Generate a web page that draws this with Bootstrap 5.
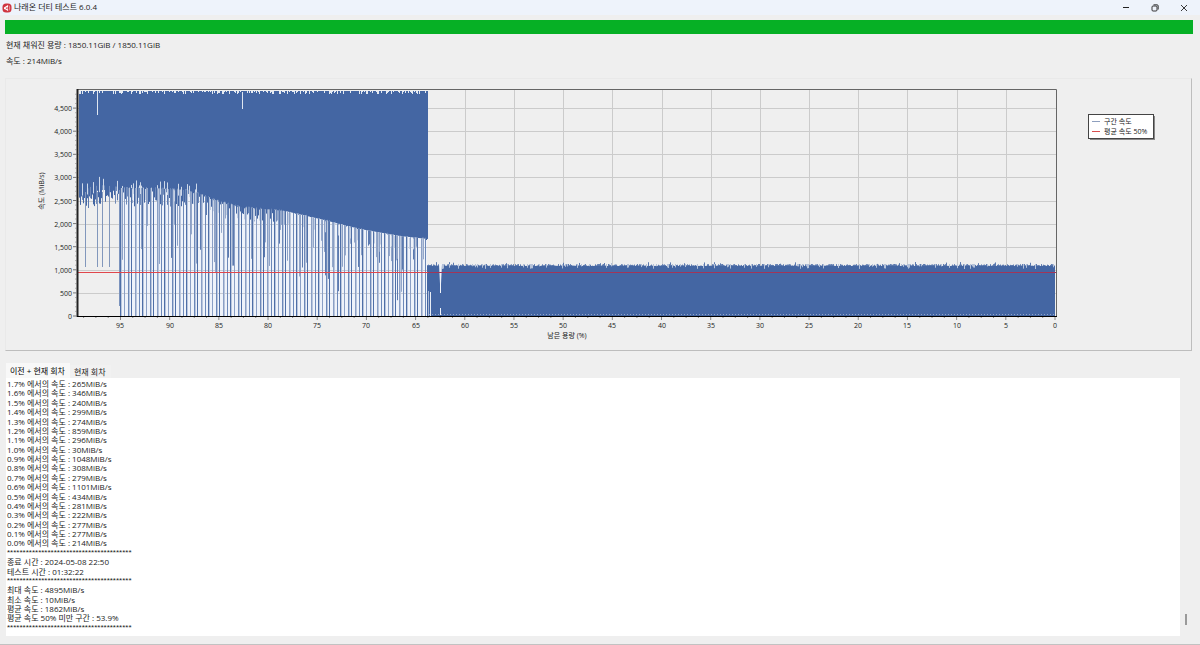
<!DOCTYPE html>
<html lang="ko">
<head>
<meta charset="utf-8">
<meta name="viewport" content="width=device-width, initial-scale=1">
<title>나래온 더티 테스트 6.0.4</title>
<link rel="stylesheet" href="https://cdn.jsdelivr.net/npm/bootstrap@5.3.0/dist/css/bootstrap.min.css">
<style>
  body { background: #efefef; color: #222; font: 8px/10px "Open Sans", "Noto Sans CJK KR", sans-serif; }
  .app-window { border-bottom: 1px solid #c2c2c2; }
  .title-bar { background: #eef3fb; height: 15px; padding: 0 2px; }
  .title-bar h1 { font-size: 8px; line-height: 10px; margin: 0 0 2px 2px; }
  .title-bar button { width: 29px; height: 14px; color: #222; }
  .fill-track { height: 14px; margin: 5px 7px 0 5px; background: #e6e6e6; }
  .fill-track .progress-bar { background: #06b025; }
  .stats { padding: 6px 6px 0; gap: 6px; }
  .chart-frame { margin: 12px 8px 0 5px; border: 1px solid #e9e9e9; border-right-color: #bdbdbd; border-bottom-color: #bdbdbd; }
  .chart-frame svg text { font-size: 7px; fill: #222; }
  .log-tabs { margin: 12px 0 0 6px; }
  .log-tabs .nav-link { padding: 2px 5px 1px 4px; height: 13px; line-height: 10px; border: 0; border-radius: 0; color: #222; background: #f1f1f1; }
  .log-tabs .nav-link.active { height: 15px; background: #f8f8f8; }
  .log-pane { background: #fff; margin: 0 20px 8px 6px; padding: 1px 1px 4px; min-height: 256px; }
  .log-pane .line { line-height: 9px; white-space: nowrap; }
  .log-pane .rule { font-family: "Liberation Sans", sans-serif; }
  .thumb { right: 13px; bottom: 19px; width: 2px; height: 11px; background: #9a9a9a; }
</style>
</head>
<body>
<div class="app-window d-flex flex-column min-vh-100 position-relative">
<header class="title-bar d-flex align-items-center">
  <svg width="10" height="10" viewBox="0 0 20 20" aria-hidden="true"><rect x="1" y="1" width="18" height="18" rx="7" fill="#cf3540"/><path d="M4 9l8-5v12l-5-3-3-1z" fill="#fff"/><path d="M7 10l4-2v5z" fill="#cf3540"/><path d="M14 5q3 5 0 10" fill="none" stroke="#f3b8bb" stroke-width="1.5"/></svg>
  <h1 class="fw-normal">나래온 더티 테스트 6.0.4</h1>
  <div class="ms-auto d-flex">
    <button class="btn p-0 border-0 d-flex align-items-center justify-content-center" aria-label="최소화"><svg width="8" height="8" viewBox="0 0 8 8"><path d="M1 3.500h6" stroke="currentColor"/></svg></button>
    <button class="btn p-0 border-0 d-flex align-items-center justify-content-center" aria-label="이전 크기로"><svg width="8" height="8" viewBox="0 0 8 8" fill="none" stroke="currentColor" stroke-width=".9"><rect x="1" y="2" width="5" height="5" rx="1"/><path d="M2.500 .8H6q1.200 0 1.200 1.200v3.500"/></svg></button>
    <button class="btn p-0 border-0 d-flex align-items-center justify-content-center" aria-label="닫기"><svg width="8" height="8" viewBox="0 0 8 8"><path d="M1 1l6 6M7 1L1 7" stroke="currentColor" stroke-width=".9"/></svg></button>
  </div>
</header>
<main class="d-flex flex-column flex-grow-1">
  <div class="progress rounded-0 fill-track" role="progressbar" aria-label="진행률" aria-valuenow="100" aria-valuemin="0" aria-valuemax="100"><div class="progress-bar w-100"></div></div>
  <section class="stats d-flex flex-column">
    <div>현재 채워진 용량 : 1850.11GiB / 1850.11GiB</div>
    <div>속도 : 214MiB/s</div>
  </section>
  <section class="chart-frame">
    <svg id="chart" class="d-block w-100" viewBox="6 79 1185 271" role="img" aria-label="남은 용량에 따른 속도"></svg>
  </section>
  <ul class="nav nav-tabs log-tabs border-0 align-items-end" role="tablist">
    <li class="nav-item"><button class="nav-link active m-0" role="tab" aria-selected="true">이전 + 현재 회차</button></li>
    <li class="nav-item"><button class="nav-link m-0" role="tab" aria-selected="false">현재 회차</button></li>
  </ul>
  <div id="log" class="log-pane flex-grow-1 d-flex flex-column justify-content-between" role="log"></div>
</main>
<div class="thumb position-absolute"></div>
</div>
<script>
  // Log lines
  const speeds = [265,346,240,299,274,859,296,30,1048,308,279,1101,434,281,222,277,277,214];
  const stars = '*'.repeat(40);
  const lines = speeds.map((s, i) => ((17 - i) / 10).toFixed(1) + '% 에서의 속도 : ' + s + 'MiB/s').concat([
    stars, '종료 시간 : 2024-05-08 22:50', '테스트 시간 : 01:32:22', stars,
    '최대 속도 : 4895MiB/s', '최소 속도 : 10MiB/s', '평균 속도 : 1862MiB/s', '평균 속도 50% 미만 구간 : 53.9%', stars]);
  document.getElementById('log').innerHTML = lines.map(t => `<div class="line${t === stars ? ' rule' : ''}">${t}</div>`).join('');

  // Chart: x is remaining capacity in %, y is speed in MiB/s
  const X = p => 1055 - p * 9.837, Y = v => 316 - v * 0.0462;
  let seed = 7;
  const rnd = () => (seed = (seed * 16807) % 2147483647) / 2147483647;
  const L = 78, R = 1056, T = 90, B = 316;
  let s = '';
  const line = (x1, y1, x2, y2, c, w = 1) => { s += `<line x1="${x1}" y1="${y1}" x2="${x2}" y2="${y2}" stroke="${c}" stroke-width="${w}"/>`; };
  const text = (x, y, t, a) => { s += `<text x="${x}" y="${y}" text-anchor="${a}">${t}</text>`; };
  const block = (x, y1, y2, c) => { s += `<rect x="${x}" y="${y1}" width="1" height="${Math.max(0, y2 - y1)}" fill="${c}"/>`; };
  for (let v = 500; v <= 4500; v += 500) line(L, Math.round(Y(v)) + .5, R, Math.round(Y(v)) + .5, '#cbcbcb');
  for (let p = 5; p <= 60; p += 5) line(Math.round(X(p)) + .5, T, Math.round(X(p)) + .5, B, '#cbcbcb');

  // Fast phase: lower envelope of the cached writes, in page units
  const env = [[79,190],[100,186],[120,188],[150,188],[185,190],[200,194],[215,200],[240,207],[252,208],[285,211],[320,219],[360,229],[400,236],[428,239]];
  const low = x => { let i = 1; while (i < env.length - 1 && env[i][0] < x) i++; const [a, b] = env[i - 1], [c, d] = env[i]; return b + (x - a) / (c - a) * (d - b); };
  s += '<rect x="120" y="180" width="307" height="136" fill="#eff3fa"/>';
  for (let v = 500; v <= 2500; v += 500) line(120, Math.round(Y(v)) + .5, 427, Math.round(Y(v)) + .5, '#c6cad3');
  s += `<path d="M79 91L${env.map(e => e.join(' ')).join(' ')} L428 91z" fill="#4466a3"/>`;
  for (let x = 79; x < 427; x++) {
    if (rnd() < .4) block(x, 91, 92 + Math.floor(rnd() * 3), '#e4eaf3');
    const base = low(x), noisy = x < 200 ? 16 : x < 250 ? 9 : x < 285 ? 12 : 1;
    if (x < 285 || rnd() < .2) block(x, base - 1, base + rnd() * noisy + (x < 200 ? 3 : 0), rnd() < .7 ? '#4466a3' : '#6e89b8');
    if (rnd() < .2) block(x, base, base + 10 + rnd() * 24, rnd() < .5 ? '#5b79af' : '#93a7ca');
    if (x > 120 && rnd() < .09) block(x, base, base + 30 + rnd() * 46, rnd() < .5 ? '#5b79af' : '#93a7ca');
    if (x < 200 && rnd() < .14) block(x, base - 2 - rnd() * 8, base + 6, '#cfd9e9');
    else if (x > 120 && rnd() < .16) block(x, base + 1, base + 12, '#c5d0e3');
  }
  for (const x of [85, 97, 102, 109]) block(x, 192, 267, '#8297bc');
  block(119, 190, 306, '#7b93bd');
  let k = 0;
  for (let x = 120; x < 427; x += (k % 3 ? 4 : 3)) {
    block(x, low(x), B, ['#4f6fa7', '#8a9fc5', '#6c88b8'][k % 3]);
    if (k % 2 === 0) block(x + 1, low(x), B, '#b9c6dd');
    if (k % 5 === 0) block(x + 2, low(x), 245 + rnd() * 22, '#8da2c7');
    k++;
  }
  block(97, 92, 115, '#dfe6f0'); block(242, 92, 109, '#dfe6f0');
  s += '<rect x="426" y="91" width="1" height="149" fill="#4466a3"/>';

  // Slow phase
  s += '<rect x="427" y="266" width="628" height="50" fill="#4466a3"/>';
  for (let x = 427; x < 1055; x++) {
    const h = rnd() * 2 + (rnd() < .03 ? 2 : 0);
    block(x, 266 - h, 266, '#5a78ae');
    if (rnd() < .12) block(x, 264, 266 + rnd() * 3, '#b4c1d8');
    if (x % 3 === 0) block(x, 314, 315, '#8fa3c6');
  }
  block(428, 291, B, '#a9b8d4'); block(430, 292, B, '#e8edf5');
  s += '<path d="M439 264h3l-1 20v9h-1v-9z" fill="#f1f4fa"/><rect x="440" y="308" width="1" height="7" fill="#f1f4fa"/>';

  // Average line, border and ticks
  line(L, 272.5, R, 272.5, '#a23558');
  s += '<path d="M428 272.500H78" stroke="#e0474c"/><path d="M77 89.500H1056.500V316" fill="none" stroke="#666"/>';
  line(77.5, 89, 77.5, 317, '#222', 2); line(77, 316.5, 1057, 316.5, '#000');
  for (let v = 0; v <= 4800; v += 100) line(v % 500 ? 75 : 73, Y(v), 77, Y(v), '#777', v % 500 ? .5 : 1);
  for (let p = 0; p < 99; p += 1.25) line(X(p), 317, X(p), p % 5 ? 318 : 320, '#888');
  for (let v = 0; v <= 4500; v += 500) text(72, Math.round(Y(v)) + 3, v.toLocaleString('en-US'), 'end');
  for (let p = 0; p <= 95; p += 5) text(Math.round(X(p)), 328, p, 'middle');
  text(567, 338, '남은 용량 (%)', 'middle');
  s += '<text transform="translate(44 191) rotate(-90)" text-anchor="middle">속도 (MiB/s)</text>';
  s += '<rect x="1090" y="116" width="65" height="24" fill="#888"/><rect x="1088.500" y="114.500" width="65" height="24" fill="#fff" stroke="#444"/>';
  s += '<rect x="1092" y="121" width="8" height="1" fill="#8e9fbe"/><rect x="1092" y="131" width="8" height="1" fill="#d94f4f"/>';
  text(1104, 124, '구간 속도', 'start'); text(1104, 134, '평균 속도 50%', 'start');
  document.getElementById('chart').innerHTML = s;
</script>
<script src="https://cdn.jsdelivr.net/npm/bootstrap@5.3.0/dist/js/bootstrap.bundle.min.js"></script>
</body>
</html>
